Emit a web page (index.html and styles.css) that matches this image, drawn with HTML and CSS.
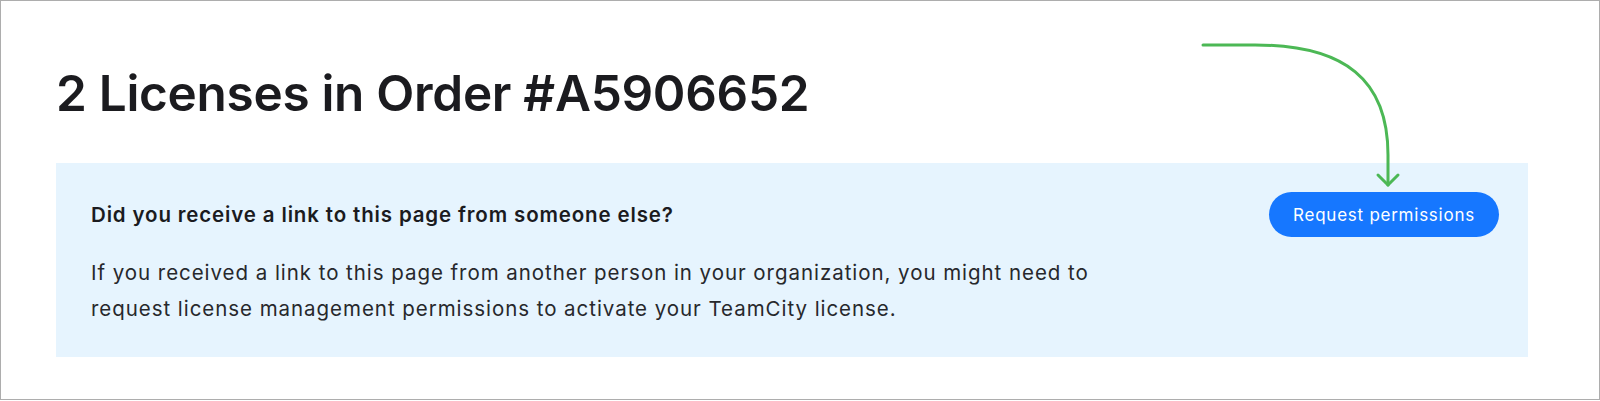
FILE: index.html
```html
<!DOCTYPE html>
<html>
<head>
<meta charset="utf-8">
<link rel="stylesheet" href="styles.css">
</head>
<body>
<div class="frame">
  <h1 class="title">2 Licenses in Order #A5906652</h1>
  <div class="notice">
    <div class="notice-text">
      <p class="notice-head">Did you receive a link to this page from someone else?</p>
      <p class="notice-body">If you received a link to this page from another person in your organization, you might need to<br>request license management permissions to activate your TeamCity license.</p>
    </div>
    <button class="btn">Request permissions</button>
  </div>
  <svg class="arrow" width="1600" height="401" viewBox="0 0 1600 401">
    <path d="M1203 45 L1255 45 C1345 45 1388 80 1388 155 L1388 185" fill="none" stroke="#4cb855" stroke-width="3" stroke-linecap="round"/>
    <path d="M1378 175 L1388 185 L1398 175" fill="none" stroke="#4cb855" stroke-width="3" stroke-linecap="round" stroke-linejoin="round"/>
  </svg>
</div>
</body>
</html>
```
FILE: styles.css
```css
html, body {
  margin: 0;
  padding: 0;
  background: #fff;
}
.frame {
  position: relative;
  box-sizing: border-box;
  width: 1600px;
  height: 400px;
  border: 1px solid #adadad;
  padding: 62px 71px 0 55px;
  font-family: Inter, "Noto Sans", sans-serif;
  color: #1b1b1f;
}
.title {
  margin: 0;
  font-size: 49.5px;
  line-height: 60px;
  font-weight: 600;
  letter-spacing: -0.3px;
}
.notice {
  margin-top: 40px;
  background: #e6f4fe;
  height: 194px;
  box-sizing: border-box;
  padding: 29px 29px 30px 35px;
  display: flex;
  justify-content: space-between;
  align-items: flex-start;
}
.notice-text {
  padding-top: 9px;
}
.notice-head {
  margin: 0;
  font-size: 20.5px;
  line-height: 28px;
  font-weight: 600;
  letter-spacing: 0.85px;
}
.notice-body {
  margin: 26px 0 0;
  font-size: 20.5px;
  line-height: 36px;
  font-weight: 400;
  letter-spacing: 0.95px;
  color: #27282c;
}
.btn {
  width: 230px;
  height: 45px;
  border: none;
  border-radius: 23px;
  background: #1677ff;
  color: #fff;
  font-family: Inter, "Noto Sans", sans-serif;
  font-size: 17px;
  font-weight: 400;
  letter-spacing: 0.75px;
  padding: 0;
}
.arrow {
  position: absolute;
  left: -1px;
  top: -1px;
  pointer-events: none;
}
```
